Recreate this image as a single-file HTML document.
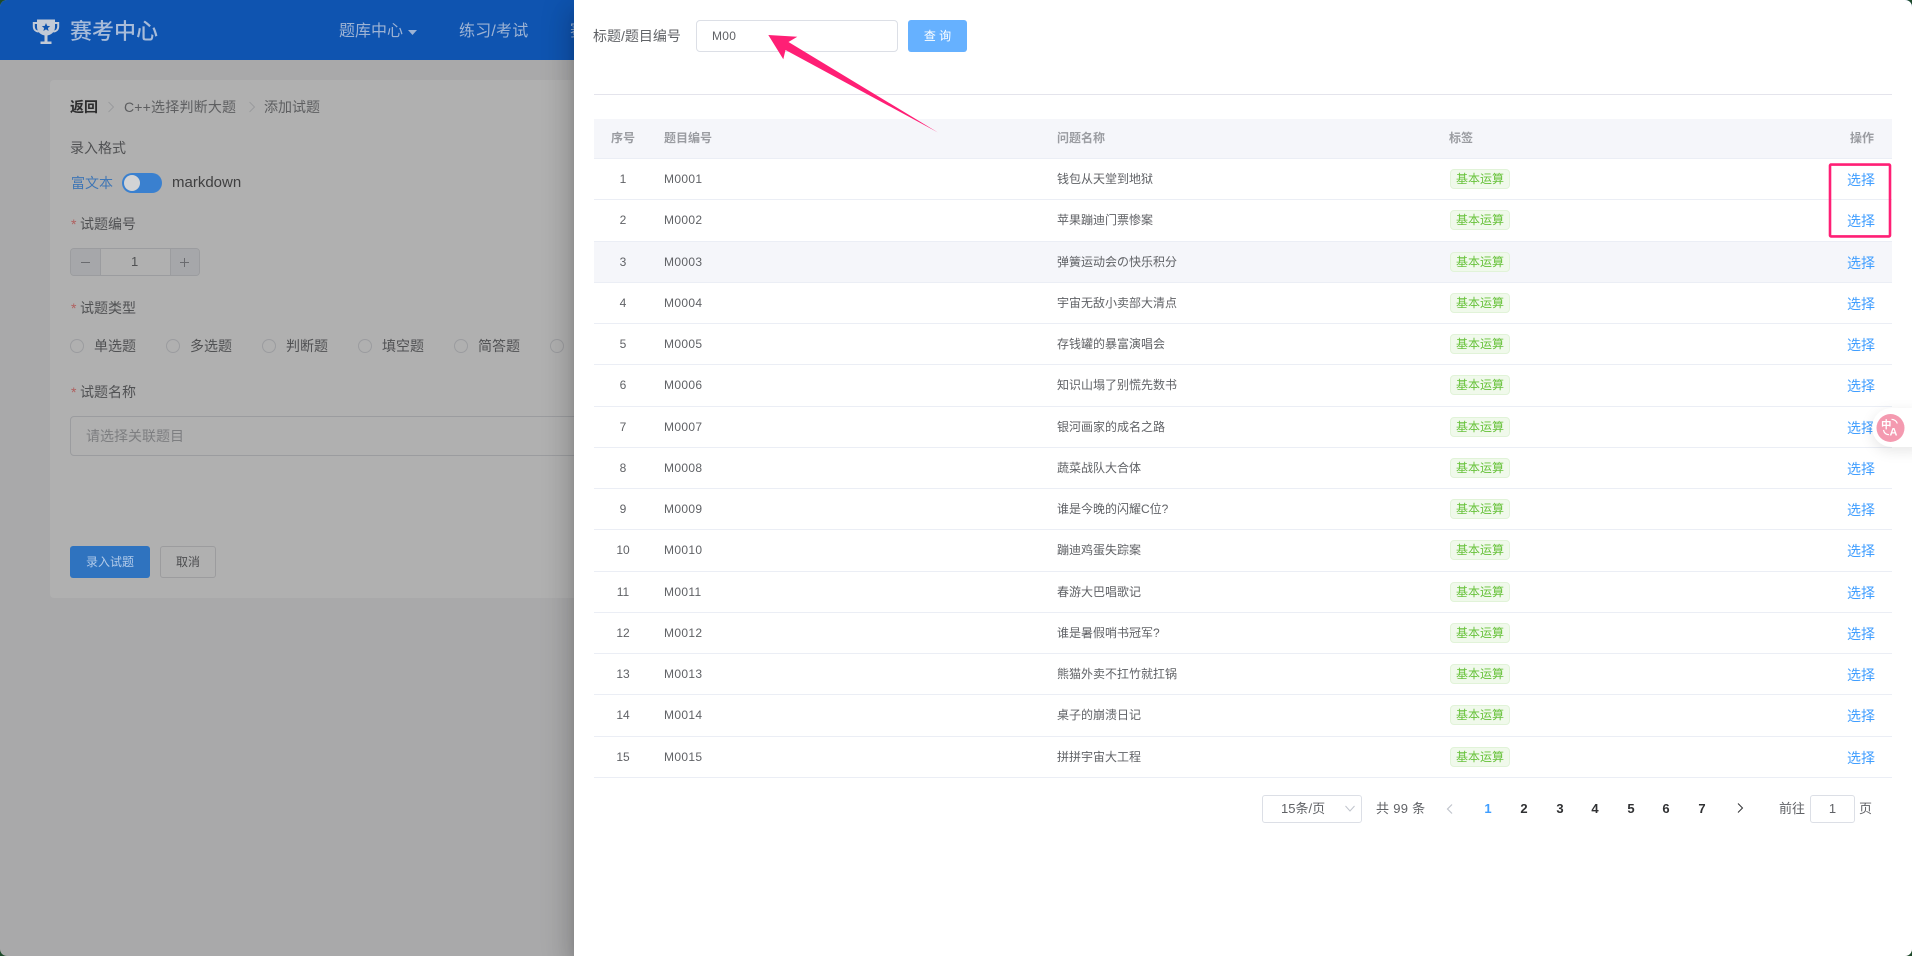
<!DOCTYPE html>
<html lang="zh"><head><meta charset="utf-8"><title>赛考中心</title>
<style>
html,body{margin:0;padding:0;width:1912px;height:956px;overflow:hidden;background:#1d4a2a}
*{box-sizing:border-box}
body{font-family:"Liberation Sans","Noto Sans CJK SC",sans-serif;font-size:14px}
#w{position:absolute;left:0;top:0;width:1912px;height:956px;border-radius:7px;overflow:hidden;background:#a9a9aa;filter:blur(.35px)}
.a{position:absolute;white-space:nowrap}
.t{position:absolute;white-space:nowrap;line-height:20px;color:#505153}
#hd{position:absolute;left:0;top:0;width:1912px;height:60px;background:#0f54b0}
#card{position:absolute;left:50px;top:80px;width:1800px;height:518px;background:#b0b0b0;border-radius:4px}
.star{color:#b0605f}
.rd{position:absolute;top:339px;width:14px;height:14px;border:1px solid #9b9c9f;border-radius:50%}
#dr{position:absolute;left:574px;top:0;width:1338px;height:956px;background:#fff;box-shadow:0 8px 10px -5px rgba(0,0,0,.2),0 16px 24px 2px rgba(0,0,0,.14),0 6px 30px 5px rgba(0,0,0,.12)}
#tb{position:absolute;left:20px;top:119px;width:1298px}
#th{position:relative;height:40px;background:#f5f6fa;border-bottom:1px solid #ebeef5;font-size:12px;font-weight:700;color:#9a9ca1}
.r{position:relative;height:41.27px;border-bottom:1px solid #ebeef5;font-size:12px;color:#606266;background:#fff}
.r.h{background:#f5f6fa}
.c,.n,.m,.q{position:absolute;top:0;line-height:40.5px;white-space:nowrap}
.c{left:0;width:58px;text-align:center}
.n{left:70px;letter-spacing:.35px}
.m{left:463px}
.g{position:absolute;left:856px;top:10px;width:60px;height:20px;line-height:18px;background:#f0f9eb;border:1px solid #e1f3d8;border-radius:4px;color:#67c23a;text-align:center;font-size:12px}
.q{left:1253px;top:1px;line-height:41px;font-size:14px;color:#409eff}
.pg{position:absolute;top:799px;line-height:20px;font-size:13px;font-weight:700;color:#303133;width:30px;text-align:center}
</style></head><body><div id="w">
<div id="hd">
<svg style="position:absolute;left:0;top:0" width="70" height="60" viewBox="0 0 70 60"><path d="M37 19.500H55V27C55 32 51 35.500 46 35.500C41 35.500 37 32 37 27Z" fill="#c3cad6"/><path d="M37 23H33.800V26.500C33.800 29.500 35.800 31.300 38.500 31.600M55 23H58.200V26.500C58.200 29.500 56.200 31.300 53.500 31.600" fill="none" stroke="#c3cad6" stroke-width="2"/><rect x="44.500" y="35" width="3" height="7" fill="#c3cad6"/><rect x="40.500" y="41.500" width="11" height="2.500" fill="#c3cad6"/><path d="M46 23L47.200 25.900 50.200 26.100 47.900 28 48.600 31 46 29.400 43.400 31 44.100 28 41.800 26.100 44.800 25.900Z" fill="#0f54b0"/></svg>
<div class="a" style="left:70px;top:19px;font-size:22px;line-height:26px;font-weight:500;color:#a8bcd9">赛考中心</div>
<div class="a" style="left:339px;top:21px;font-size:16px;line-height:22px;color:#9db3d4">题库中心</div>
<svg style="position:absolute;left:407px;top:29px" width="11" height="7"><path d="M1 1H10L5.500 6Z" fill="#9db3d4"/></svg>
<div class="a" style="left:459px;top:21px;font-size:16px;line-height:22px;letter-spacing:.2px;color:#9db3d4">练习/考试</div>
<div class="a" style="left:570px;top:21px;font-size:16px;line-height:22px;color:#9db3d4">赛</div>
</div>
<div id="card"></div>
<div class="t" style="left:70px;top:97px;font-weight:700;color:#2c2c2d">返回</div>
<svg style="position:absolute;left:106px;top:101px" width="10" height="12"><path d="M2.500 1L7.500 6 2.500 11" fill="none" stroke="#9a9b9d" stroke-width="1"/></svg>
<div class="t" style="left:124px;top:97px;letter-spacing:.2px;color:#5d5e60">C++选择判断大题</div>
<svg style="position:absolute;left:247px;top:101px" width="10" height="12"><path d="M2.500 1L7.500 6 2.500 11" fill="none" stroke="#9a9b9d" stroke-width="1"/></svg>
<div class="t" style="left:264px;top:97px;color:#5d5e60">添加试题</div>
<div class="t" style="left:70px;top:138px">录入格式</div>
<div class="t" style="left:71px;top:173px;color:#3f76b5">富文本</div>
<div class="a" style="left:122px;top:173px;width:40px;height:20px;border-radius:10px;background:#3a80cf"><div class="a" style="left:2px;top:2px;width:16px;height:16px;border-radius:50%;background:#d2d3d5"></div></div>
<div class="t" style="left:172px;top:173px;font-size:15px;color:#3f3f40">markdown</div>
<div class="t star" style="left:71px;top:214px">*</div><div class="t" style="left:80px;top:214px">试题编号</div>
<div class="a" style="left:70px;top:248px;width:130px;height:28px;border:1px solid #9b9c9f;border-radius:4px;background:#b0b0b0"></div>
<div class="a" style="left:71px;top:249px;width:30px;height:26px;background:#a6a7aa;border-right:1px solid #9b9c9f;border-radius:3px 0 0 3px"></div>
<div class="a" style="left:170px;top:249px;width:29px;height:26px;background:#a6a7aa;border-left:1px solid #9b9c9f;border-radius:0 3px 3px 0"></div>
<svg style="position:absolute;left:70px;top:248px" width="130" height="28"><path d="M11 14.500H20M110 14.500H119M114.500 10V19" stroke="#6a6b6f" stroke-width="1"/></svg>
<div class="t" style="left:131px;top:252px;font-size:13px">1</div>
<div class="t star" style="left:71px;top:298px">*</div><div class="t" style="left:80px;top:298px">试题类型</div>
<div class="rd" style="left:70px"></div><div class="t" style="left:94px;top:336px">单选题</div>
<div class="rd" style="left:166px"></div><div class="t" style="left:190px;top:336px">多选题</div>
<div class="rd" style="left:262px"></div><div class="t" style="left:286px;top:336px">判断题</div>
<div class="rd" style="left:358px"></div><div class="t" style="left:382px;top:336px">填空题</div>
<div class="rd" style="left:454px"></div><div class="t" style="left:478px;top:336px">简答题</div>
<div class="rd" style="left:550px"></div>
<div class="t star" style="left:71px;top:382px">*</div><div class="t" style="left:80px;top:382px">试题名称</div>
<div class="a" style="left:70px;top:416px;width:1700px;height:40px;border:1px solid #9b9c9f;border-radius:4px"></div>
<div class="t" style="left:86px;top:426px;color:#7d7e80">请选择关联题目</div>
<div class="a" style="left:70px;top:546px;width:80px;height:32px;line-height:32px;text-align:center;font-size:12px;background:#2f73bf;border-radius:3px;color:#b2cbea">录入试题</div>
<div class="a" style="left:160px;top:546px;width:56px;height:32px;line-height:30px;text-align:center;font-size:12px;border:1px solid #9c9c9e;border-radius:3px;color:#4c4d4f">取消</div>

<div id="dr">
<div class="a" style="left:19px;top:26px;line-height:20px;color:#606266">标题/题目编号</div>
<div class="a" style="left:122px;top:20px;width:202px;height:32px;border:1px solid #dcdfe6;border-radius:4px;background:#fff;line-height:30px;padding-left:15px;font-size:12px;color:#606266;letter-spacing:.3px">M00</div>
<div class="a" style="left:334px;top:20px;width:59px;height:32px;background:#66b1ff;border-radius:3px;color:#fff;font-size:12px;line-height:32px;text-align:center">查 询</div>
<div class="a" style="left:20px;top:94px;width:1298px;height:1px;background:#e4e4ec"></div>
<div id="tb">
<div id="th"><div class="c" style="line-height:38.5px">序号</div><div class="n" style="line-height:38.5px;letter-spacing:0">题目编号</div><div class="m" style="line-height:38.5px">问题名称</div><div class="m" style="left:855px;line-height:38.5px">标签</div><div class="m" style="left:1256px;line-height:38.5px">操作</div></div>
<div class="r"><div class="c">1</div><div class="n">M0001</div><div class="m">钱包从天堂到地狱</div><div class="g">基本运算</div><div class="q">选择</div></div>
<div class="r"><div class="c">2</div><div class="n">M0002</div><div class="m">苹果蹦迪门票惨案</div><div class="g">基本运算</div><div class="q">选择</div></div>
<div class="r h"><div class="c">3</div><div class="n">M0003</div><div class="m">弹簧运动会の快乐积分</div><div class="g">基本运算</div><div class="q">选择</div></div>
<div class="r"><div class="c">4</div><div class="n">M0004</div><div class="m">宇宙无敌小卖部大清点</div><div class="g">基本运算</div><div class="q">选择</div></div>
<div class="r"><div class="c">5</div><div class="n">M0005</div><div class="m">存钱罐的暴富演唱会</div><div class="g">基本运算</div><div class="q">选择</div></div>
<div class="r"><div class="c">6</div><div class="n">M0006</div><div class="m">知识山塌了别慌先数书</div><div class="g">基本运算</div><div class="q">选择</div></div>
<div class="r"><div class="c">7</div><div class="n">M0007</div><div class="m">银河画家的成名之路</div><div class="g">基本运算</div><div class="q">选择</div></div>
<div class="r"><div class="c">8</div><div class="n">M0008</div><div class="m">蔬菜战队大合体</div><div class="g">基本运算</div><div class="q">选择</div></div>
<div class="r"><div class="c">9</div><div class="n">M0009</div><div class="m">谁是今晚的闪耀C位?</div><div class="g">基本运算</div><div class="q">选择</div></div>
<div class="r"><div class="c">10</div><div class="n">M0010</div><div class="m">蹦迪鸡蛋失踪案</div><div class="g">基本运算</div><div class="q">选择</div></div>
<div class="r"><div class="c">11</div><div class="n">M0011</div><div class="m">春游大巴唱歌记</div><div class="g">基本运算</div><div class="q">选择</div></div>
<div class="r"><div class="c">12</div><div class="n">M0012</div><div class="m">谁是暑假哨书冠军?</div><div class="g">基本运算</div><div class="q">选择</div></div>
<div class="r"><div class="c">13</div><div class="n">M0013</div><div class="m">熊猫外卖不扛竹就扛锅</div><div class="g">基本运算</div><div class="q">选择</div></div>
<div class="r"><div class="c">14</div><div class="n">M0014</div><div class="m">桌子的崩溃日记</div><div class="g">基本运算</div><div class="q">选择</div></div>
<div class="r"><div class="c">15</div><div class="n">M0015</div><div class="m">拼拼宇宙大工程</div><div class="g">基本运算</div><div class="q">选择</div></div>
</div>
<div class="a" style="left:688px;top:795px;width:100px;height:28px;border:1px solid #dcdfe6;border-radius:3px;background:#fff;padding-left:18px;line-height:26px;font-size:13px;color:#606266">15条/页</div>
<svg style="position:absolute;left:770px;top:805px" width="12" height="8"><path d="M1.500 1L6 6 10.500 1" fill="none" stroke="#c0c4cc" stroke-width="1"/></svg>
<div class="a" style="left:802px;top:799px;line-height:20px;font-size:13px;letter-spacing:.3px;color:#606266">共 99 条</div>
<svg style="position:absolute;left:871px;top:803px" width="10" height="12"><path d="M7 1.500L2.500 6 7 10.500" fill="none" stroke="#c0c4cc" stroke-width="1.200"/></svg>
<div class="pg" style="left:899px;color:#409eff">1</div>
<div class="pg" style="left:935px">2</div>
<div class="pg" style="left:971px">3</div>
<div class="pg" style="left:1006px">4</div>
<div class="pg" style="left:1042px">5</div>
<div class="pg" style="left:1077px">6</div>
<div class="pg" style="left:1113px">7</div>
<svg style="position:absolute;left:1161px;top:802px" width="10" height="12"><path d="M3 1.500L7.500 6 3 10.500" fill="none" stroke="#303133" stroke-width="1"/></svg>
<div class="a" style="left:1205px;top:799px;line-height:20px;font-size:13px;color:#606266">前往</div>
<div class="a" style="left:1236px;top:795px;width:45px;height:28px;border:1px solid #dcdfe6;border-radius:3px;text-align:center;line-height:26px;font-size:13px;color:#606266">1</div>
<div class="a" style="left:1285px;top:799px;line-height:20px;font-size:13px;color:#606266">页</div>
</div>

<svg style="position:absolute;left:0;top:0" width="1912" height="956" viewBox="0 0 1912 956">
<polygon points="768.300,35 797.300,36.700 788.500,42 938,132.500 785.500,50 783.300,59.300" fill="#ff1f75"/>
<rect x="1830" y="164.600" width="60" height="71.800" rx="1" fill="none" stroke="#ff1f75" stroke-width="2.600"/>
</svg>

<div class="a" style="left:1872px;top:408px;width:60px;height:39px;background:#fff;border-radius:20px;box-shadow:0 4px 14px rgba(0,0,0,.1)"></div>
<svg style="position:absolute;left:1876px;top:413px" width="30" height="30" viewBox="1876 413 30 30"><circle cx="1890.500" cy="428" r="14" fill="#f49ab0"/><text x="1881" y="428" font-size="10.500" font-weight="700" fill="#fff" font-family="'Noto Sans CJK SC',sans-serif">中</text><text x="1889.500" y="435.500" font-size="11" font-weight="700" fill="#fff" font-family="'Liberation Sans',sans-serif">A</text><path d="M1891.500 419.300C1894.500 419.500 1896.500 421 1897.300 423.500M1883.500 430C1884 433 1886 434.500 1889 434.700" fill="none" stroke="#fff" stroke-width="1.200"/></svg>
</div></body></html>
